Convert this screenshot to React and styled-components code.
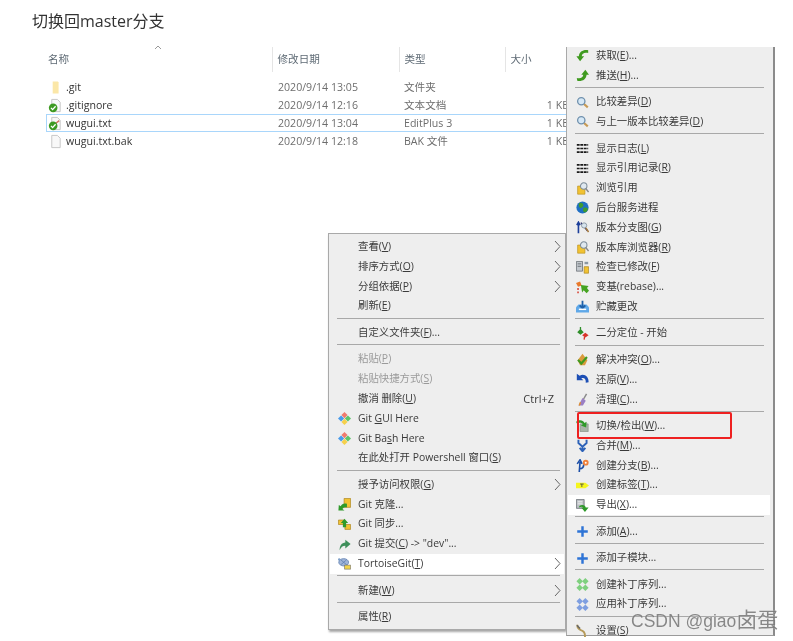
import React from 'react';
import styled, { createGlobalStyle } from 'styled-components';

const GlobalStyle = createGlobalStyle`
  html, body { margin: 0; padding: 0; background: #fff; }
  body { font-family: "Open Sans", "Noto Sans CJK SC", sans-serif; }
`;

const Page = styled.div`
  position: relative;
  width: 793px;
  height: 641px;
  overflow: hidden;
  background: #fff;
  box-sizing: border-box;
  padding: 11px 0 0 32px;
  filter: blur(0.4px);
`;

const Title = styled.h1`
  margin: 0;
  font-size: 16px;
  line-height: 20px;
  font-weight: 400;
  color: #333;
`;

const FileList = styled.div`
  position: relative;
  margin: 16px 0 0 14px;
  width: 530px;
`;

const HeaderRow = styled.div`
  display: grid;
  grid-template-columns: 226px 127px 106px 71px;
  height: 25px;
  margin-bottom: 6px;
`;

const HeaderCell = styled.div`
  padding-left: ${p => (p.$first ? '2px' : '4.5px')};
  border-left: ${p => (p.$first ? '0' : '1px solid #e5e5e5')};
  font-size: 10.6px;
  line-height: 25px;
  color: #5f6b75;
`;

const SortCaret = styled.svg`
  position: absolute;
  left: 108px;
  top: -2px;
`;

const FileRow = styled.div`
  display: grid;
  grid-template-columns: 226px 126px 106px 72px;
  height: 18px;
  line-height: 16px;
  font-size: 10.6px;
  box-sizing: border-box;
  border: 1px solid ${p => (p.$selected ? '#a9d6fb' : 'transparent')};
`;

const FileName = styled.div`
  display: flex;
  align-items: center;
  gap: 3px;
  padding-left: 1px;
  color: #333;
`;

const FileCell = styled.div`
  padding-left: 5px;
  color: #6d6d6d;
`;

const SizeCell = styled(FileCell)`
  text-align: right;
  padding-right: 8px;
`;

const Menu = styled.div`
  position: absolute;
  box-sizing: border-box;
  background: #eeeeee;
  color: #3a3a3a;
  font-size: 10.4px;
`;

const LeftMenu = styled(Menu)`
  left: 328px;
  top: 233px;
  width: 238px;
  height: 397px;
  padding: 3px 1px 0 1px;
  border: 1px solid #a9a9a9;
  box-shadow: 1px 2px 2px rgba(0, 0, 0, 0.35);
`;

const RightMenu = styled(Menu)`
  left: 566px;
  top: 47px;
  width: 209px;
  height: 589px;
  padding: 0 3px 0 1px;
  border-left: 1px solid #a9a9a9;
  border-right: 2px solid #8b8b8b;
  border-bottom: 1px solid #9a9a9a;

  & > :first-child {
    margin-top: -1px;
  }
`;

const Row = styled.div`
  display: grid;
  grid-template-columns: ${p => p.$gutter}px 1fr auto 10px;
  align-items: center;
  height: 19.8px;
  line-height: 19.8px;
  white-space: nowrap;
  background: ${p => (p.$hot ? '#fff' : 'transparent')};
  color: ${p => (p.$off ? '#9a9a9a' : 'inherit')};
`;

const IconSlot = styled.span`
  display: flex;
  align-items: center;
  justify-content: center;
  height: 100%;
`;

const Hint = styled.span`
  font-size: 11px;
`;

const Arrow = styled.svg`
  display: block;
`;

const Separator = styled.div`
  height: 1px;
  margin: 1.5px ${p => p.$right}px 4.2px ${p => p.$left}px;
  background: #a8a8a8;
`;

const HighlightBox = styled.div`
  position: absolute;
  left: 577px;
  top: 412px;
  width: 155px;
  height: 27px;
  box-sizing: border-box;
  border: 2px solid #ee2020;
  border-radius: 2px;
`;

const Watermark = styled.div`
  position: absolute;
  left: 631px;
  top: 609px;
  font-family: "Liberation Sans", "Noto Sans CJK SC", sans-serif;
  font-size: 17.5px;
  line-height: 22px;
  color: rgba(90, 90, 90, 0.72);
  text-shadow: 0 0 1px rgba(255, 255, 255, 0.8);
  white-space: nowrap;
`;

const WatermarkName = styled.span`
  font-size: 21px;
`;

const greenCheck = (
  <>
    <circle cx="5.5" cy="10.5" r="4.6" fill="#3d9a22" />
    <path d="M3.2 10.5l1.7 1.9 3.2-3.6" stroke="#fff" strokeWidth="1.4" fill="none" />
  </>
);

const fileSheet = <path d="M4 1.5h6l3 3v10H4z" fill="#f8f8f8" stroke="#c4c4c4" />;

const lens = (
  <>
    <path d="M9.500 9.500l5 4.500" stroke="#c79a55" strokeWidth="2.600" />
    <circle cx="6.500" cy="6.500" r="4.500" fill="#d6e8f6" stroke="#6f90ad" strokeWidth="1.600" />
  </>
);

const logLines = (
  <path d="M1 3.500h14M1 8h14M1 12.500h14" stroke="#1a1a1a" strokeWidth="2" strokeDasharray="3.500 .8" />
);

const barrel = (
  <>
    <path d="M2 5h9v10H2z" fill="#f1c232" stroke="#b98f1d" strokeWidth=".8" />
    <circle cx="9.500" cy="5" r="4" fill="#dfe8f0" stroke="#7d8c99" strokeWidth="1.300" />
    <path d="M12 8l3.500 4.500" stroke="#888" strokeWidth="1.800" />
  </>
);

const plus = <path d="M8 1.500v13M1.500 8h13" stroke="#2e74d6" strokeWidth="3" />;

const patch = c => (
  <>
    <path d="M4.500 0l4 4-4 4-4-4z" fill={c} />
    <path d="M11.500 0l4 4-4 4-4-4z" fill={c} />
    <path d="M4.500 8l4 4-4 4-4-4z" fill={c} />
    <path d="M11.500 8l4 4-4 4-4-4z" fill={c} />
  </>
);

const gitLogo = (
  <>
    <path d="M8 0l3.800 3.800L8 7.600 4.200 3.800z" fill="#ef7a6d" />
    <path d="M3.800 4.200L7.600 8l-3.800 3.800L0 8z" fill="#4a9bea" />
    <path d="M12.200 4.200L16 8l-3.800 3.800L8.400 8z" fill="#5cc46a" />
    <path d="M8 8.400l3.800 3.800L8 16l-3.800-3.800z" fill="#f5d04c" />
  </>
);

const icons = {
  fileCheck: <>{fileSheet}{greenCheck}</>,
  fileEdit: <>{fileSheet}<path d="M8 8l4-3" stroke="#d5705f" strokeWidth="1.6" />{greenCheck}</>,
  file: fileSheet,
  folder: <path d="M5 1.500h5.500l.8 1.200v11.800H5z" fill="#fbe7a8" />,
  fetch: <path d="M15 5C10 4 7.500 5.500 7 9h3l-5 6-4.500-6h3C4 3 9 .5 15 1.500z" fill="#3f9a1f" />,
  push: <path d="M1 11c5 1 7.500-.5 8-4H6.500L11.500 1 16 7h-3c-.5 6-5.500 8.500-11.500 7.500z" fill="#3f9a1f" />,
  lens,
  log: logLines,
  refs: barrel,
  globe: (
    <>
      <circle cx="8" cy="8" r="7.500" fill="#1f6fc4" />
      <path d="M4 2.500c2-1 4.500 0 5 2S7 8.500 5.500 8.500 2.500 5 4 2.500zM9 8.500c2-1 5 0 5.500 1S13 14 11 14s-3-3-2-5.500z" fill="#3f9a2f" />
    </>
  ),
  graph: (
    <>
      <path d="M3 15V3M1 5l2-3.500L5 5" stroke="#1d3f9a" strokeWidth="2" fill="none" />
      <path d="M6 2l8 10" stroke="#2a2a6a" strokeWidth="1.600" />
      <circle cx="10" cy="5.500" r="3.200" fill="#d8e4ee" stroke="#7d8c99" />
      <path d="M12 8.500l3.500 5" stroke="#a5793e" strokeWidth="2" />
    </>
  ),
  check: (
    <>
      <path d="M.5 .5h7.500v12H.5z" fill="#c3c8cd" stroke="#6d7378" />
      <path d="M2 3.500h4.500M2 6.500h4.500" stroke="#5d6368" />
      <path d="M10 7h5.500v8H10z" fill="#f1c232" stroke="#a57f1c" strokeWidth=".8" />
      <path d="M10.500 1h4.500v3h-4.500z" fill="#8a97a3" />
    </>
  ),
  rebase: (
    <>
      <path d="M0 2.500L5 .5l2 5-4.500 1.500z" fill="#e8792b" />
      <path d="M2.500 8.500v2.500M2.500 13v2" stroke="#d63a2a" strokeWidth="1.800" />
      <path d="M6 5l9.500 1-2 2.500 2.500 3.500-3 3-3.500-3.500L7.500 14z" fill="#45a321" />
    </>
  ),
  stash: (
    <>
      <path d="M0 9l3-3.500h10L16 9v6.500H0z" fill="#5fa8e8" />
      <path d="M8 1v8M4.500 6.500L8 10l3.500-3.500" stroke="#1d5fa8" strokeWidth="2.200" fill="none" />
      <path d="M3.500 11.500h9" stroke="#fff" strokeWidth="1.800" />
    </>
  ),
  bisect: (
    <>
      <path d="M5.500 2L9.500 6.500 5.500 9.500 1.500 6.500z" fill="#2f8f2a" />
      <path d="M11.500 7l4 3-4 3-4-3z" fill="#d8332a" />
      <path d="M10.500 12l-.5 3.500" stroke="#d8332a" strokeWidth="1.600" />
      <path d="M5.500 0v3" stroke="#2f8f2a" strokeWidth="1.600" />
    </>
  ),
  resolve: (
    <>
      <path d="M2 9l6-8 6 8-3 6H5z" fill="#d99a3c" />
      <path d="M2.500 8.500l4 4.500 7-8" stroke="#3f9a1f" strokeWidth="2.600" fill="none" />
    </>
  ),
  revert: <path d="M1 1v8h8L6.500 6.500C10 5 12.500 7.500 12 12l3.500-.5C16 4 9.500 0 4.500 3.500z" fill="#1d4fb5" />,
  clean: (
    <>
      <path d="M13 1L9 8" stroke="#8a8a8a" strokeWidth="1.800" />
      <path d="M8 6l4 3.500-3.500 6L3 15.500z" fill="#9a7fc4" />
      <path d="M5.500 11.500L4 15.500" stroke="#e08f2a" strokeWidth="1.800" />
    </>
  ),
  switch: (
    <>
      <path d="M5 6h10v9.500H5z" fill="#a9b4a9" stroke="#7a847a" strokeWidth=".7" />
      <path d="M0 3.500c4-3 8.500-2.500 10.500 1.500L13 3.500l-.5 7-6.500-2.500 2.500-1.500C7 4.500 3.500 4 1.500 6z" fill="#2f9a2a" />
    </>
  ),
  merge: <path d="M3 1v4l5 4.500L13 5V1M8 8v6M4.500 11L8 15l3.500-4" stroke="#2d62b8" strokeWidth="2.400" fill="none" />,
  branch: (
    <>
      <path d="M4 16L5 3.500M1.500 6L5 1l2.500 5M4.500 12c3.500 0 5-2.500 5-5.500" stroke="#1d4fa8" strokeWidth="2" fill="none" />
      <circle cx="12" cy="4.500" r="3.500" fill="#f0803a" />
      <circle cx="12" cy="4.500" r="1.200" fill="#fff" />
    </>
  ),
  tag: (
    <>
      <path d="M0 4.500h11.500L16 8l-4.500 3.500H0z" fill="#f5f51e" />
      <path d="M5 6.200h4.500M7.200 6.200v3.600" stroke="#444" strokeWidth="1" />
    </>
  ),
  export: (
    <>
      <path d="M.5 .5H10v11H.5z" fill="#b9bdc2" stroke="#6d7378" />
      <path d="M2 3.500h6M2 6h6" stroke="#fff" />
      <path d="M4 8.500c4-2 7.500-1 8 2h3.500L11 16 6.500 10.500H9C8.500 9.500 6.500 9 4 10.500z" fill="#2f9a2a" />
    </>
  ),
  add: plus,
  patchMake: patch('#7fd07f'),
  patchApply: patch('#7f9fe0'),
  settings: (
    <>
      <path d="M2 1c-1 4 1.500 5.500 4 6.500 3.500 1 5.500 3.500 5 8.500" stroke="#b59a5a" strokeWidth="2.400" fill="none" />
      <path d="M1 1.500l4 4" stroke="#666" strokeWidth="1.800" />
    </>
  ),
  gitLogo,
  clone: (
    <>
      <path d="M7.500 .5h8v11h-8z" fill="#f1c232" stroke="#a57f1c" strokeWidth=".8" />
      <path d="M11 7C7.500 6 4.500 7 3.500 10L1 8.500 .5 15.500H8L5.500 13.500c1-2 3-2.500 5.500-2z" fill="#2f9a2a" />
    </>
  ),
  sync: (
    <>
      <path d="M.5 2.500h7V8h-7zM8.500 8h7v6h-7z" fill="#f1c232" stroke="#a57f1c" strokeWidth=".8" />
      <path d="M3.500 6L8 1l4.500 5h-2.500v5.500H6V6z" fill="#2f9a2a" />
    </>
  ),
  commit: <path d="M2 15C2 9 4.500 6 9 5.500V2l6.500 5.500L9 13V9.500c-3.500 0-5 1.500-7 5.500z" fill="#3d8f5a" />,
  tortoise: (
    <>
      <ellipse cx="7" cy="6.500" rx="6" ry="4.500" fill="#9fb4d8" stroke="#5f7fb0" />
      <path d="M3.500 3.500l7 6M10.500 3.500l-7 6" stroke="#5f7fb0" />
      <path d="M8 10h7.500v5H8z" fill="#f1d24a" stroke="#666" strokeWidth=".7" />
      <circle cx="1.500" cy="3" r="1.500" fill="#7f9fc8" />
    </>
  ),
};

const Icon = ({ name, size }) => (
  <svg width={size} height={size} viewBox="0 0 16 16" style={{ display: 'block', flex: 'none' }}>
    {icons[name]}
  </svg>
);

// text, shortcut letter, text after the shortcut
const leftItems = [
  { text: '查看(', key: 'V', after: ')', sub: true },
  { text: '排序方式(', key: 'O', after: ')', sub: true },
  { text: '分组依据(', key: 'P', after: ')', sub: true },
  { text: '刷新(', key: 'E', after: ')' },
  'sep',
  { text: '自定义文件夹(', key: 'F', after: ')...' },
  'sep',
  { text: '粘贴(', key: 'P', after: ')', off: true },
  { text: '粘贴快捷方式(', key: 'S', after: ')', off: true },
  { text: '撤消 删除(', key: 'U', after: ')', hint: 'Ctrl+Z' },
  { icon: 'gitLogo', text: 'Git ', key: 'G', after: 'UI Here' },
  { icon: 'gitLogo', text: 'Git Ba', key: 's', after: 'h Here' },
  { text: '在此处打开 Powershell 窗口(', key: 'S', after: ')' },
  'sep',
  { text: '授予访问权限(', key: 'G', after: ')', sub: true },
  { icon: 'clone', text: 'Git 克隆...' },
  { icon: 'sync', text: 'Git 同步...' },
  { icon: 'commit', text: 'Git 提交(', key: 'C', after: ') -> "dev"...' },
  { icon: 'tortoise', text: 'TortoiseGit(', key: 'T', after: ')', sub: true, hot: true },
  'sep',
  { text: '新建(', key: 'W', after: ')', sub: true },
  'sep',
  { text: '属性(', key: 'R', after: ')' },
];

const rightItems = [
  { icon: 'fetch', text: '获取(', key: 'E', after: ')...' },
  { icon: 'push', text: '推送(', key: 'H', after: ')...' },
  'sep',
  { icon: 'lens', text: '比较差异(', key: 'D', after: ')' },
  { icon: 'lens', text: '与上一版本比较差异(', key: 'D', after: ')' },
  'sep',
  { icon: 'log', text: '显示日志(', key: 'L', after: ')' },
  { icon: 'log', text: '显示引用记录(', key: 'R', after: ')' },
  { icon: 'refs', text: '浏览引用' },
  { icon: 'globe', text: '后台服务进程' },
  { icon: 'graph', text: '版本分支图(', key: 'G', after: ')' },
  { icon: 'refs', text: '版本库浏览器(', key: 'R', after: ')' },
  { icon: 'check', text: '检查已修改(', key: 'F', after: ')' },
  { icon: 'rebase', text: '变基(rebase)...' },
  { icon: 'stash', text: '贮藏更改' },
  'sep',
  { icon: 'bisect', text: '二分定位 - 开始' },
  'sep',
  { icon: 'resolve', text: '解决冲突(', key: 'O', after: ')...' },
  { icon: 'revert', text: '还原(', key: 'V', after: ')...' },
  { icon: 'clean', text: '清理(', key: 'C', after: ')...' },
  'sep',
  { icon: 'switch', text: '切换/检出(', key: 'W', after: ')...' },
  { icon: 'merge', text: '合并(', key: 'M', after: ')...' },
  { icon: 'branch', text: '创建分支(', key: 'B', after: ')...' },
  { icon: 'tag', text: '创建标签(', key: 'T', after: ')...' },
  { icon: 'export', text: '导出(', key: 'X', after: ')...', hot: true },
  'sep',
  { icon: 'add', text: '添加(', key: 'A', after: ')...' },
  'sep',
  { icon: 'add', text: '添加子模块...' },
  'sep',
  { icon: 'patchMake', text: '创建补丁序列...' },
  { icon: 'patchApply', text: '应用补丁序列...' },
  'sep',
  { icon: 'settings', text: '设置(', key: 'S', after: ')' },
];

const files = [
  { icon: 'folder', name: '.git', date: '2020/9/14 13:05', type: '文件夹', size: '' },
  { icon: 'fileCheck', name: '.gitignore', date: '2020/9/14 12:16', type: '文本文档', size: '1 KB' },
  { icon: 'fileEdit', name: 'wugui.txt', date: '2020/9/14 13:04', type: 'EditPlus 3', size: '1 KB', selected: true },
  { icon: 'file', name: 'wugui.txt.bak', date: '2020/9/14 12:18', type: 'BAK 文件', size: '1 KB' },
];

const MenuItems = ({ items, gutter, sepLeft, sepRight }) =>
  items.map((item, i) =>
    item === 'sep' ? (
      <Separator key={i} $left={sepLeft} $right={sepRight} />
    ) : (
      <Row key={i} $gutter={gutter} $hot={item.hot} $off={item.off}>
        <IconSlot>{item.icon && <Icon name={item.icon} size={13} />}</IconSlot>
        <span>
          {item.text}
          {item.key && <u>{item.key}</u>}
          {item.after}
        </span>
        <Hint>{item.hint}</Hint>
        {item.sub ? (
          <Arrow width="7" height="13" viewBox="0 0 7 13">
            <path d="M1 1l5 5.500-5 5.500" stroke="#666" fill="none" />
          </Arrow>
        ) : (
          <span />
        )}
      </Row>
    )
  );

export default function App() {
  return (
    <Page>
      <GlobalStyle />
      <Title>切换回master分支</Title>
      <FileList>
        <SortCaret width="8" height="5" viewBox="0 0 8 5">
          <path d="M1 4l3-3 3 3" stroke="#999" fill="none" />
        </SortCaret>
        <HeaderRow>
          <HeaderCell $first>名称</HeaderCell>
          <HeaderCell>修改日期</HeaderCell>
          <HeaderCell>类型</HeaderCell>
          <HeaderCell>大小</HeaderCell>
        </HeaderRow>
        {files.map(f => (
          <FileRow key={f.name} $selected={f.selected}>
            <FileName>
              <Icon name={f.icon} size={15} />
              {f.name}
            </FileName>
            <FileCell>{f.date}</FileCell>
            <FileCell>{f.type}</FileCell>
            <SizeCell>{f.size}</SizeCell>
          </FileRow>
        ))}
      </FileList>
      <LeftMenu>
        <MenuItems items={leftItems} gutter={28} sepLeft={7} sepRight={4} />
      </LeftMenu>
      <RightMenu>
        <MenuItems items={rightItems} gutter={28} sepLeft={7} sepRight={6} />
      </RightMenu>
      <HighlightBox />
      <Watermark>
        CSDN @giao<WatermarkName>卤蛋</WatermarkName>
      </Watermark>
    </Page>
  );
}
